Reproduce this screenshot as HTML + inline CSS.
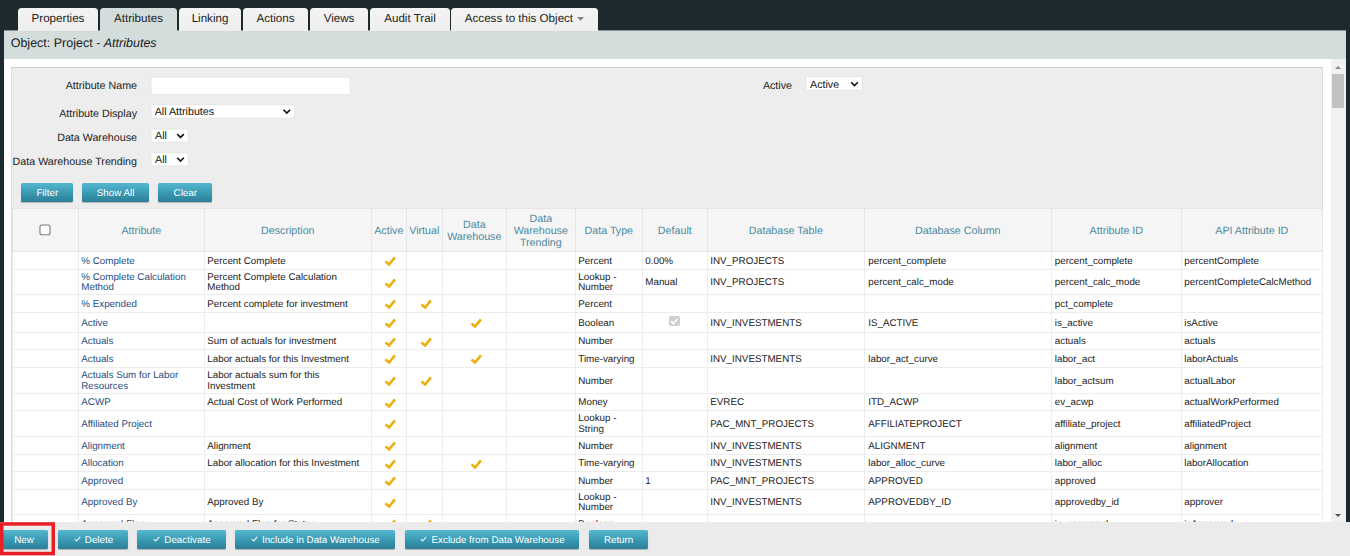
<!DOCTYPE html>
<html><head><meta charset="utf-8"><title>Object: Project - Attributes</title>
<style>
*{box-sizing:border-box}
html,body{margin:0;padding:0}
body{width:1350px;height:556px;overflow:hidden;background:#1c2a30;font-family:"Liberation Sans",Arial,sans-serif;text-rendering:geometricPrecision;position:relative;color:#222}
.abs{position:absolute}
.tab{position:absolute;top:8px;height:23px;background:linear-gradient(#f4f4f4,#eeeeee);border-radius:3.5px 3.5px 0 0;font-size:11.6px;color:#222;text-align:center;line-height:22.8px;white-space:nowrap}
.tab.on{background:#d3dedc}
#hdr{left:3.3px;top:31px;width:1342.7px;height:27.7px;background:#d3dedc;font-size:12.5px;line-height:24.4px;padding-left:7.4px;color:#1a1a1a}
#main{left:3.3px;top:58.5px;width:1328.7px;height:464px;background:#fff;overflow:hidden}
#sb{left:1330.8px;top:58.5px;width:15.2px;height:464px;background:#f1f1f1}
#thumb{left:1.6px;top:15.5px;width:11.5px;height:33.7px;background:#c1c1c1}
.arr{position:absolute;left:4.6px;width:0;height:0;border-left:3.7px solid transparent;border-right:3.7px solid transparent}
#panel{left:7.6px;top:8.3px;width:1312.2px;height:480px;background:#ededed;border:1px solid #dcdcdc;border-top-color:#cfcfcf}
.lbl{position:absolute;font-size:10.7px;color:#222;white-space:nowrap;text-align:right;line-height:12px}
.itx{position:absolute;font-size:10.7px;line-height:12px;color:#111;white-space:nowrap}
.btn{position:absolute;height:19px;background:linear-gradient(#54b8d0 0%,#3c9cb5 48%,#2a7f97 100%);color:#fff;font-size:9.8px;line-height:21.4px;text-align:center;border-radius:1.5px;white-space:nowrap;box-shadow:0 1px 1px rgba(0,0,0,.25)}
.btn svg{width:7px;height:6px;margin-right:4.2px;margin-left:0.8px;vertical-align:0.5px}
table{position:absolute;left:8.8px;top:149.5px;border-collapse:collapse;table-layout:fixed;width:1310px;background:#fff}
th{background:#f5f5f5;color:#4b8aa0;font-weight:normal;font-size:10.7px;line-height:12px;text-align:center;border:1px solid #e5e5e5;padding:2px 2.6px 0 2px;height:43px;vertical-align:middle}
td{font-size:9.8px;line-height:10.9px;color:#222;border:1px solid #ededed;padding:0 0 0 2.2px;vertical-align:top;overflow:hidden;white-space:nowrap}
td a{color:#1f4e80}
td:nth-child(11){padding-left:3.2px}
td:nth-child(12){padding-left:2.7px}
td.c{text-align:center;padding:0;vertical-align:middle}
.ck{width:12px;height:10.5px;display:inline-block;vertical-align:middle;position:relative;top:1.4px;left:1.3px}
.ck path{fill:none;stroke:#ebb00c;stroke-width:2.6;stroke-linecap:butt;stroke-linejoin:miter}
.dcb{display:inline-block;width:10.4px;height:10.6px;border-radius:1.8px;background:#d0d0d0;vertical-align:middle;position:relative;top:-0.9px;left:-0.6px}
.dcb svg{display:block;width:10.4px;height:10.4px}
.dcb path{fill:none;stroke:#fff;stroke-width:1.5}
#foot{left:0;top:522.4px;width:1350px;height:34px;background:#ebebeb}
#red{left:0;top:522px}
</style></head><body>
<div class="abs" style="left:3.3px;top:30px;width:1342.7px;height:1px;background:#828e90"></div>
<div class="tab" style="left:18px;width:80px">Properties</div>
<div class="tab on" style="left:100px;width:77px">Attributes</div>
<div class="tab" style="left:179px;width:62px">Linking</div>
<div class="tab" style="left:243px;width:65px">Actions</div>
<div class="tab" style="left:310px;width:58px">Views</div>
<div class="tab" style="left:370px;width:80px">Audit Trail</div>
<div class="tab" style="left:451.2px;width:146.8px">Access to this Object <svg width="7" height="4" viewBox="0 0 7 4" style="vertical-align:1.4px;margin-left:1px"><path d="M0 0 L7 0 L3.5 3.8 Z" fill="#858585"/></svg></div>
<div id="hdr" class="abs">Object: Project - <i>Attributes</i></div>
<div id="main" class="abs">
 <div id="panel" class="abs"></div>
 <div class="lbl" style="left:0;width:133.7px;top:21.4px">Attribute Name</div>
 <div class="lbl" style="left:0;width:133.7px;top:49.3px">Attribute Display</div>
 <div class="lbl" style="left:0;width:133.7px;top:73.1px">Data Warehouse</div>
 <div class="lbl" style="left:0;width:133.7px;top:97.1px">Data Warehouse Trending</div>
 <div class="lbl" style="left:700px;width:88.7px;top:21.4px">Active</div>
 <div class="btn" style="left:18.2px;top:124.7px;width:51.6px">Filter</div>
 <div class="btn" style="left:78.7px;top:124.7px;width:67.2px">Show All</div>
 <div class="btn" style="left:155px;top:124.7px;width:54px">Clear</div>
 <table>
 <colgroup><col style="width:66px"><col style="width:126px"><col style="width:167px"><col style="width:35px"><col style="width:36px"><col style="width:64px"><col style="width:69px"><col style="width:67px"><col style="width:65px"><col style="width:157px"><col style="width:187px"><col style="width:130px"><col style="width:141px"></colgroup>
 <tr><th><svg width="12" height="12" viewBox="0 0 12 12" style="vertical-align:middle;position:relative;top:-0.65px;left:-0.6px"><rect x="0.95" y="0.95" width="10.1" height="9.8" rx="2.1" fill="#fff" stroke="#7d7d7d" stroke-width="1.1"/></svg></th><th>Attribute</th><th>Description</th><th>Active</th><th>Virtual</th><th>Data<br>Warehouse</th><th>Data<br>Warehouse<br>Trending</th><th>Data Type</th><th>Default</th><th>Database Table</th><th>Database Column</th><th>Attribute ID</th><th>API Attribute ID</th></tr>
<tr style="height:18px"><td></td><td style="padding-top:4.65px"><a>% Complete</a></td><td style="padding-top:4.65px">Percent Complete</td><td class="c"><svg class="ck" viewBox="0 0 12 10.5"><path d="M1.5 5.6 L5.1 8.5 L10.9 1.4" /></svg></td><td class="c"></td><td class="c"></td><td></td><td style="padding-top:4.65px">Percent</td><td style="padding-top:4.65px">0.00%</td><td style="padding-top:4.65px">INV_PROJECTS</td><td style="padding-top:4.65px">percent_complete</td><td style="padding-top:4.65px">percent_complete</td><td style="padding-top:4.65px">percentComplete</td></tr>
<tr style="height:25px"><td></td><td style="padding-top:2.60px;line-height:10.6px"><a>% Complete Calculation<br>Method</a></td><td style="padding-top:2.60px;line-height:10.6px">Percent Complete Calculation<br>Method</td><td class="c"><svg class="ck" viewBox="0 0 12 10.5"><path d="M1.5 5.6 L5.1 8.5 L10.9 1.4" /></svg></td><td class="c"></td><td class="c"></td><td></td><td style="padding-top:2.60px;line-height:10.6px">Lookup -<br>Number</td><td style="padding-top:8.15px">Manual</td><td style="padding-top:8.15px">INV_PROJECTS</td><td style="padding-top:8.15px">percent_calc_mode</td><td style="padding-top:8.15px">percent_calc_mode</td><td style="padding-top:8.15px">percentCompleteCalcMethod</td></tr>
<tr style="height:18px"><td></td><td style="padding-top:4.65px"><a>% Expended</a></td><td style="padding-top:4.65px">Percent complete for investment</td><td class="c"><svg class="ck" viewBox="0 0 12 10.5"><path d="M1.5 5.6 L5.1 8.5 L10.9 1.4" /></svg></td><td class="c"><svg class="ck" viewBox="0 0 12 10.5"><path d="M1.5 5.6 L5.1 8.5 L10.9 1.4" /></svg></td><td class="c"></td><td></td><td style="padding-top:4.65px">Percent</td><td></td><td></td><td></td><td style="padding-top:4.65px">pct_complete</td><td></td></tr>
<tr style="height:20px"><td></td><td style="padding-top:5.65px"><a>Active</a></td><td></td><td class="c"><svg class="ck" viewBox="0 0 12 10.5"><path d="M1.5 5.6 L5.1 8.5 L10.9 1.4" /></svg></td><td class="c"></td><td class="c"><svg class="ck" viewBox="0 0 12 10.5"><path d="M1.5 5.6 L5.1 8.5 L10.9 1.4" /></svg></td><td></td><td style="padding-top:5.65px">Boolean</td><td class="c"><span class="dcb"><svg viewBox="0 0 10 10"><path d="M2 5.2 L4.2 7.4 L8 2.8"/></svg></span></td><td style="padding-top:5.65px">INV_INVESTMENTS</td><td style="padding-top:5.65px">IS_ACTIVE</td><td style="padding-top:5.65px">is_active</td><td style="padding-top:5.65px">isActive</td></tr>
<tr style="height:17px"><td></td><td style="padding-top:4.15px"><a>Actuals</a></td><td style="padding-top:4.15px">Sum of actuals for investment</td><td class="c"><svg class="ck" viewBox="0 0 12 10.5"><path d="M1.5 5.6 L5.1 8.5 L10.9 1.4" /></svg></td><td class="c"><svg class="ck" viewBox="0 0 12 10.5"><path d="M1.5 5.6 L5.1 8.5 L10.9 1.4" /></svg></td><td class="c"></td><td></td><td style="padding-top:4.15px">Number</td><td></td><td></td><td></td><td style="padding-top:4.15px">actuals</td><td style="padding-top:4.15px">actuals</td></tr>
<tr style="height:18px"><td></td><td style="padding-top:4.65px"><a>Actuals</a></td><td style="padding-top:4.65px">Labor actuals for this Investment</td><td class="c"><svg class="ck" viewBox="0 0 12 10.5"><path d="M1.5 5.6 L5.1 8.5 L10.9 1.4" /></svg></td><td class="c"></td><td class="c"><svg class="ck" viewBox="0 0 12 10.5"><path d="M1.5 5.6 L5.1 8.5 L10.9 1.4" /></svg></td><td></td><td style="padding-top:4.65px">Time-varying</td><td></td><td style="padding-top:4.65px">INV_INVESTMENTS</td><td style="padding-top:4.65px">labor_act_curve</td><td style="padding-top:4.65px">labor_act</td><td style="padding-top:4.65px">laborActuals</td></tr>
<tr style="height:26px"><td></td><td style="padding-top:3.10px;line-height:10.6px"><a>Actuals Sum for Labor<br>Resources</a></td><td style="padding-top:3.10px;line-height:10.6px">Labor actuals sum for this<br>Investment</td><td class="c"><svg class="ck" viewBox="0 0 12 10.5"><path d="M1.5 5.6 L5.1 8.5 L10.9 1.4" /></svg></td><td class="c"><svg class="ck" viewBox="0 0 12 10.5"><path d="M1.5 5.6 L5.1 8.5 L10.9 1.4" /></svg></td><td class="c"></td><td></td><td style="padding-top:8.65px">Number</td><td></td><td></td><td></td><td style="padding-top:8.65px">labor_actsum</td><td style="padding-top:8.65px">actualLabor</td></tr>
<tr style="height:17px"><td></td><td style="padding-top:4.15px"><a>ACWP</a></td><td style="padding-top:4.15px">Actual Cost of Work Performed</td><td class="c"><svg class="ck" viewBox="0 0 12 10.5"><path d="M1.5 5.6 L5.1 8.5 L10.9 1.4" /></svg></td><td class="c"></td><td class="c"></td><td></td><td style="padding-top:4.15px">Money</td><td></td><td style="padding-top:4.15px">EVREC</td><td style="padding-top:4.15px">ITD_ACWP</td><td style="padding-top:4.15px">ev_acwp</td><td style="padding-top:4.15px">actualWorkPerformed</td></tr>
<tr style="height:26px"><td></td><td style="padding-top:8.65px"><a>Affiliated Project</a></td><td></td><td class="c"><svg class="ck" viewBox="0 0 12 10.5"><path d="M1.5 5.6 L5.1 8.5 L10.9 1.4" /></svg></td><td class="c"></td><td class="c"></td><td></td><td style="padding-top:3.10px;line-height:10.6px">Lookup -<br>String</td><td></td><td style="padding-top:8.65px">PAC_MNT_PROJECTS</td><td style="padding-top:8.65px">AFFILIATEPROJECT</td><td style="padding-top:8.65px">affiliate_project</td><td style="padding-top:8.65px">affiliatedProject</td></tr>
<tr style="height:18px"><td></td><td style="padding-top:4.65px"><a>Alignment</a></td><td style="padding-top:4.65px">Alignment</td><td class="c"><svg class="ck" viewBox="0 0 12 10.5"><path d="M1.5 5.6 L5.1 8.5 L10.9 1.4" /></svg></td><td class="c"></td><td class="c"></td><td></td><td style="padding-top:4.65px">Number</td><td></td><td style="padding-top:4.65px">INV_INVESTMENTS</td><td style="padding-top:4.65px">ALIGNMENT</td><td style="padding-top:4.65px">alignment</td><td style="padding-top:4.65px">alignment</td></tr>
<tr style="height:17px"><td></td><td style="padding-top:4.15px"><a>Allocation</a></td><td style="padding-top:4.15px">Labor allocation for this Investment</td><td class="c"><svg class="ck" viewBox="0 0 12 10.5"><path d="M1.5 5.6 L5.1 8.5 L10.9 1.4" /></svg></td><td class="c"></td><td class="c"><svg class="ck" viewBox="0 0 12 10.5"><path d="M1.5 5.6 L5.1 8.5 L10.9 1.4" /></svg></td><td></td><td style="padding-top:4.15px">Time-varying</td><td></td><td style="padding-top:4.15px">INV_INVESTMENTS</td><td style="padding-top:4.15px">labor_alloc_curve</td><td style="padding-top:4.15px">labor_alloc</td><td style="padding-top:4.15px">laborAllocation</td></tr>
<tr style="height:18px"><td></td><td style="padding-top:4.65px"><a>Approved</a></td><td></td><td class="c"><svg class="ck" viewBox="0 0 12 10.5"><path d="M1.5 5.6 L5.1 8.5 L10.9 1.4" /></svg></td><td class="c"></td><td class="c"></td><td></td><td style="padding-top:4.65px">Number</td><td style="padding-top:4.65px">1</td><td style="padding-top:4.65px">PAC_MNT_PROJECTS</td><td style="padding-top:4.65px">APPROVED</td><td style="padding-top:4.65px">approved</td><td></td></tr>
<tr style="height:25px"><td></td><td style="padding-top:8.15px"><a>Approved By</a></td><td style="padding-top:8.15px">Approved By</td><td class="c"><svg class="ck" viewBox="0 0 12 10.5"><path d="M1.5 5.6 L5.1 8.5 L10.9 1.4" /></svg></td><td class="c"></td><td class="c"></td><td></td><td style="padding-top:2.60px;line-height:10.6px">Lookup -<br>Number</td><td></td><td style="padding-top:8.15px">INV_INVESTMENTS</td><td style="padding-top:8.15px">APPROVEDBY_ID</td><td style="padding-top:8.15px">approvedby_id</td><td style="padding-top:8.15px">approver</td></tr>
<tr style="height:18px"><td></td><td style="padding-top:4.65px"><a>Approved Flag</a></td><td style="padding-top:4.65px">Approved Flag for Status</td><td class="c"><svg class="ck" viewBox="0 0 12 10.5"><path d="M1.5 5.6 L5.1 8.5 L10.9 1.4" /></svg></td><td class="c"><svg class="ck" viewBox="0 0 12 10.5"><path d="M1.5 5.6 L5.1 8.5 L10.9 1.4" /></svg></td><td class="c"></td><td></td><td style="padding-top:4.65px">Boolean</td><td></td><td></td><td></td><td style="padding-top:4.65px">is_approved</td><td style="padding-top:4.65px">isApproved</td></tr>
 </table>
</div>
<svg id="ov" class="abs" width="1350" height="556" viewBox="0 0 1350 556" style="left:0;top:0"><rect x="151.00" y="77.20" width="199.20" height="17.50" fill="#fff" stroke="#e2e2e2" stroke-width="0.8"/><rect x="150.90" y="104.80" width="143.60" height="13.40" fill="#fff" stroke="#e2e2e2" stroke-width="0.8"/><rect x="150.90" y="129.10" width="37.30" height="13.00" fill="#fff" stroke="#e2e2e2" stroke-width="0.8"/><rect x="150.90" y="152.80" width="37.30" height="13.10" fill="#fff" stroke="#e2e2e2" stroke-width="0.8"/><rect x="805.90" y="76.80" width="56.30" height="13.40" fill="#fff" stroke="#e2e2e2" stroke-width="0.8"/><path d="M283.50 109.80 L286.80 113.10 L290.10 109.80" fill="none" stroke="#111" stroke-width="1.6"/><path d="M177.20 134.10 L180.50 137.40 L183.80 134.10" fill="none" stroke="#111" stroke-width="1.6"/><path d="M177.20 157.70 L180.50 161.00 L183.80 157.70" fill="none" stroke="#111" stroke-width="1.6"/><path d="M851.20 82.30 L854.50 85.60 L857.80 82.30" fill="none" stroke="#111" stroke-width="1.6"/></svg>
<div class="itx" style="left:154.7px;top:106.1px">All Attributes</div>
<div class="itx" style="left:155px;top:130.1px">All</div>
<div class="itx" style="left:155px;top:154.1px">All</div>
<div class="itx" style="left:810px;top:78.9px">Active</div>
<div id="sb" class="abs"><div class="arr" style="top:7px;border-bottom:3.5px solid #8a8a8a"></div><div id="thumb" class="abs"></div><div class="arr" style="top:455px;border-top:3.5px solid #505050"></div></div>
<div class="abs" style="left:0;top:0;width:3.6px;height:523px;background:#1c2a30"></div>
<div id="foot" class="abs">
 <div class="btn" style="left:3px;top:7.5px;width:45px;padding-right:3px">New</div>
 <div class="btn" style="left:58px;top:7.5px;width:70px"><svg viewBox="0 0 8 7"><path d="M0.8 3.6 L3 5.8 L7.2 1" fill="none" stroke="#fff" stroke-opacity="0.88" stroke-width="1.35"/></svg>Delete</div>
 <div class="btn" style="left:137.3px;top:7.5px;width:88.4px"><svg viewBox="0 0 8 7"><path d="M0.8 3.6 L3 5.8 L7.2 1" fill="none" stroke="#fff" stroke-opacity="0.88" stroke-width="1.35"/></svg>Deactivate</div>
 <div class="btn" style="left:235px;top:7.5px;width:159.7px"><svg viewBox="0 0 8 7"><path d="M0.8 3.6 L3 5.8 L7.2 1" fill="none" stroke="#fff" stroke-opacity="0.88" stroke-width="1.35"/></svg>Include in Data Warehouse</div>
 <div class="btn" style="left:404.7px;top:7.5px;width:174.8px"><svg viewBox="0 0 8 7"><path d="M0.8 3.6 L3 5.8 L7.2 1" fill="none" stroke="#fff" stroke-opacity="0.88" stroke-width="1.35"/></svg>Exclude from Data Warehouse</div>
 <div class="btn" style="left:589.4px;top:7.5px;width:58.4px">Return</div>
</div>
<svg id="red" class="abs" width="60" height="36" viewBox="0 0 60 36"><rect x="1.75" y="1.95" width="51.5" height="29.6" fill="none" stroke="#e81f27" stroke-width="3.5"/></svg>
</body></html>
